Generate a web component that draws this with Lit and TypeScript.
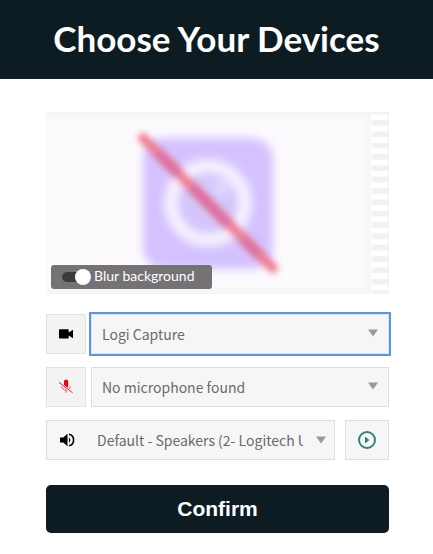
import { LitElement, html, css, svg } from "lit";
import { customElement, property, state } from "lit/decorators.js";
import { classMap } from "lit/directives/class-map.js";

@customElement("device-select")
class DeviceSelect extends LitElement {
  @property() label = "";
  @property({ attribute: false }) options: string[] = [];
  @property({ type: Boolean, reflect: true }) active = false;
  @property({ type: Boolean, reflect: true }) plain = false;

  static styles = css`
    :host {
      display: grid;
      flex: 1;
      min-width: 0;
      height: 40px;
    }
    .field,
    .arrow {
      grid-area: 1 / 1;
    }
    .field {
      appearance: none;
      box-sizing: border-box;
      width: 100%;
      min-width: 0;
      height: 40px;
      margin: 0;
      padding: 0 30px 0 10px;
      border: 1px solid #dedede;
      border-radius: 0;
      background: #f6f6f6;
      color: #6b6b6b;
      font: 14px "Noto Sans CJK SC", "Noto Sans", sans-serif;
      outline: none;
    }
    :host([active]) .field {
      border-color: #cfe6fb;
      outline: 2px solid #5797e6;
    }
    :host([plain]) .field {
      border-color: transparent;
      background: transparent;
    }
    .arrow {
      align-self: center;
      justify-self: end;
      width: 10px;
      height: 8px;
      margin: 0 11px 2px 0;
      fill: #999;
      pointer-events: none;
    }
    :host([plain]) .arrow {
      margin-right: 8px;
      margin-bottom: 0;
    }
  `;

  render() {
    return html`
      <select class="field" aria-label=${this.label}>
        ${this.options.map((o) => html`<option>${o}</option>`)}
      </select>
      <svg class="arrow" viewBox="0 0 10 8" aria-hidden="true"><path d="M0 .5h10L5 7.5z" /></svg>
    `;
  }
}

const camera = svg`<path d="M1 4q0-.8.8-.8h8.100q.8 0 .8.8v2.600l4.300-2.900v8.600l-4.300-2.900v2.400q0 .8-.8.8H1.800q-.8 0-.8-.8z"/>`;

const mutedMic = svg`
  <path d="M6 2.600a2 2 0 0 1 4.200 0V7.500a2 2 0 0 1-4.200 0z" fill="#e8000c"/>
  <path d="M3.800 7.200c0 5.200 8.500 5.200 8.500 0M8.050 11.200v2.500" fill="none" stroke="#f0555c" stroke-width="1"/>
  <path d="M1 3.400 14.600 13.800" stroke="#f3f3f3" stroke-width="2.200"/>
  <path d="M1 3.400 14.600 13.800" stroke="#ea2630" stroke-width="1"/>`;

const speaker = svg`
  <path d="M1 5.500h3.300L8.500 1.800v12.400L4.300 10.500H1z"/>
  <path d="M10 5.200q2.600 2.800 0 5.600z"/>
  <path d="M10 2.200c6.100 1.200 6.100 10.400 0 11.600" fill="none" stroke="#000" stroke-width="1.600"/>`;

@customElement("app-root")
class AppRoot extends LitElement {
  @state() private blur = true;

  static styles = css`
    :host {
      display: block;
      background: #fff;
      font-family: Lato, sans-serif;
    }
    .header {
      padding: 15px 16px 17px;
      background: #0d1c22;
      color: #fff;
      text-align: center;
    }
    .title {
      margin: 0;
      font-size: 35px;
      line-height: 47px;
      font-weight: 700;
    }
    .form {
      display: flex;
      flex-direction: column;
      padding: 33px 44px 21px 46px;
    }
    .preview {
      position: relative;
      overflow: hidden;
      margin-bottom: 20px;
    }
    .video {
      display: block;
      width: 100%;
      height: auto;
    }
    .blur {
      position: absolute;
      left: 5px;
      bottom: 5px;
      display: flex;
      align-items: center;
      gap: 3px;
      box-sizing: border-box;
      width: 161px;
      height: 24px;
      padding: 0 0 2px 11px;
      border-radius: 3px;
      background: #747274;
      color: #fff;
      font-size: 14px;
      line-height: 22px;
    }
    .switch {
      appearance: none;
      display: grid;
      align-items: center;
      width: 29px;
      height: 16px;
      margin: 2px 0 0;
    }
    .switch::before,
    .switch::after {
      content: "";
      grid-area: 1 / 1;
    }
    .switch::before {
      height: 10px;
      border-radius: 5px;
      background: #3d3c3d;
    }
    .switch::after {
      width: 16px;
      height: 16px;
      border-radius: 50%;
      background: #fff;
    }
    .switch.on::after {
      justify-self: end;
    }
    .row {
      display: flex;
      gap: 5px;
      margin-bottom: 13px;
    }
    .row.wide {
      gap: 10px;
      margin-bottom: 25px;
    }
    .box {
      display: flex;
      align-items: center;
      justify-content: center;
      box-sizing: border-box;
      width: 40px;
      height: 40px;
      border: 1px solid #e2e2e2;
      background: #f3f3f3;
    }
    .group {
      display: flex;
      flex: 1;
      min-width: 0;
      box-sizing: border-box;
      height: 40px;
      align-items: center;
      border: 1px solid #dedede;
      background: #f6f6f6;
    }
    .group .icon {
      margin: 0 0 0 12px;
    }
    .group device-select {
      margin-left: 11px;
    }
    .icon {
      flex: none;
      width: 16px;
      height: 16px;
    }
    .play {
      width: 44px;
      height: 40px;
      padding: 0;
      border: 1px solid #dedede;
      background: #f6f6f6;
      display: grid;
      place-items: center;
    }
    .ring {
      width: 18px;
      height: 18px;
    }
    .confirm {
      height: 48px;
      border: 0;
      border-radius: 5px;
      background: #0d1c22;
      color: #fff;
      font: 700 21px "Liberation Sans", Arial, sans-serif;
    }
  `;

  private icon(content: unknown) {
    return html`<svg class="icon" viewBox="0 0 16 16" aria-hidden="true">${content}</svg>`;
  }

  private picture() {
    return html`<svg class="video" viewBox="0 0 343 182" role="img" aria-label="Camera preview">
      <defs>
        <filter id="soft" x="-20%" y="-20%" width="140%" height="140%" color-interpolation-filters="sRGB">
          <feGaussianBlur stdDeviation="4.5" />
        </filter>
        <filter id="line" x="-20%" y="-20%" width="140%" height="140%" color-interpolation-filters="sRGB">
          <feGaussianBlur stdDeviation="3" />
        </filter>
        <pattern id="stripes" x="326" y="8" width="17" height="11.35" patternUnits="userSpaceOnUse">
          <rect width="17" height="5.7" fill="#f2f2f2" />
        </pattern>
      </defs>
      <rect width="343" height="182" fill="#fff" />
      <rect width="325" height="182" fill="#f6f5f7" />
      <rect x="-12" y="6" width="332" height="170" fill="#fcfafd" filter="url(#line)" />
      <g filter="url(#soft)">
        <rect x="97" y="26" width="130" height="131" rx="21" fill="#d4c2ff" />
        <circle cx="162" cy="91" r="37" fill="#d4c5fb" stroke="#f6f0ff" stroke-width="14" />
        <circle cx="175" cy="76" r="8" fill="#e2d8fc" />
      </g>
      <path d="M97 26 227 156" stroke="#ee7d92" stroke-width="10" stroke-linecap="round" filter="url(#line)" />
      <path
        d="M112 41 132 61M146 75 182 112M197 127 213 143"
        stroke="#d86ea6"
        stroke-width="7"
        filter="url(#line)"
      />
      <rect x="325" width="1" height="182" fill="#fff" />
      <rect x="326" width="17" height="182" fill="url(#stripes)" />
      <path d="M342.5 0v182" stroke="#f2f2f2" />
    </svg>`;
  }

  render() {
    return html`
      <header class="header"><h1 class="title">Choose Your Devices</h1></header>
      <main class="form">
        <div class="preview">
          ${this.picture()}
          <label class="blur">
            <input
              type="checkbox"
              role="switch"
              class=${classMap({ switch: true, on: this.blur })}
              .checked=${this.blur}
              @change=${() => (this.blur = !this.blur)}
            />
            Blur background
          </label>
        </div>
        <div class="row">
          <div class="box">${this.icon(camera)}</div>
          <device-select active label="Camera" .options=${["Logi Capture"]}></device-select>
        </div>
        <div class="row">
          <div class="box">${this.icon(mutedMic)}</div>
          <device-select label="Microphone" .options=${["No microphone found"]}></device-select>
        </div>
        <div class="row wide">
          <div class="group">
            ${this.icon(speaker)}
            <device-select plain label="Speakers" .options=${["Default - Speakers (2- Logitech USB Headset)"]}></device-select>
          </div>
          <button class="play" type="button" aria-label="Play test sound">
            <svg class="ring" viewBox="0 0 18 18" aria-hidden="true">
              <circle cx="9" cy="9" r="8" fill="none" stroke="#2f8577" stroke-width="2" />
              <path d="M7 5.500v7L11.500 9z" fill="#2f8577" />
            </svg>
          </button>
        </div>
        <button class="confirm" type="button">Confirm</button>
      </main>
    `;
  }
}
